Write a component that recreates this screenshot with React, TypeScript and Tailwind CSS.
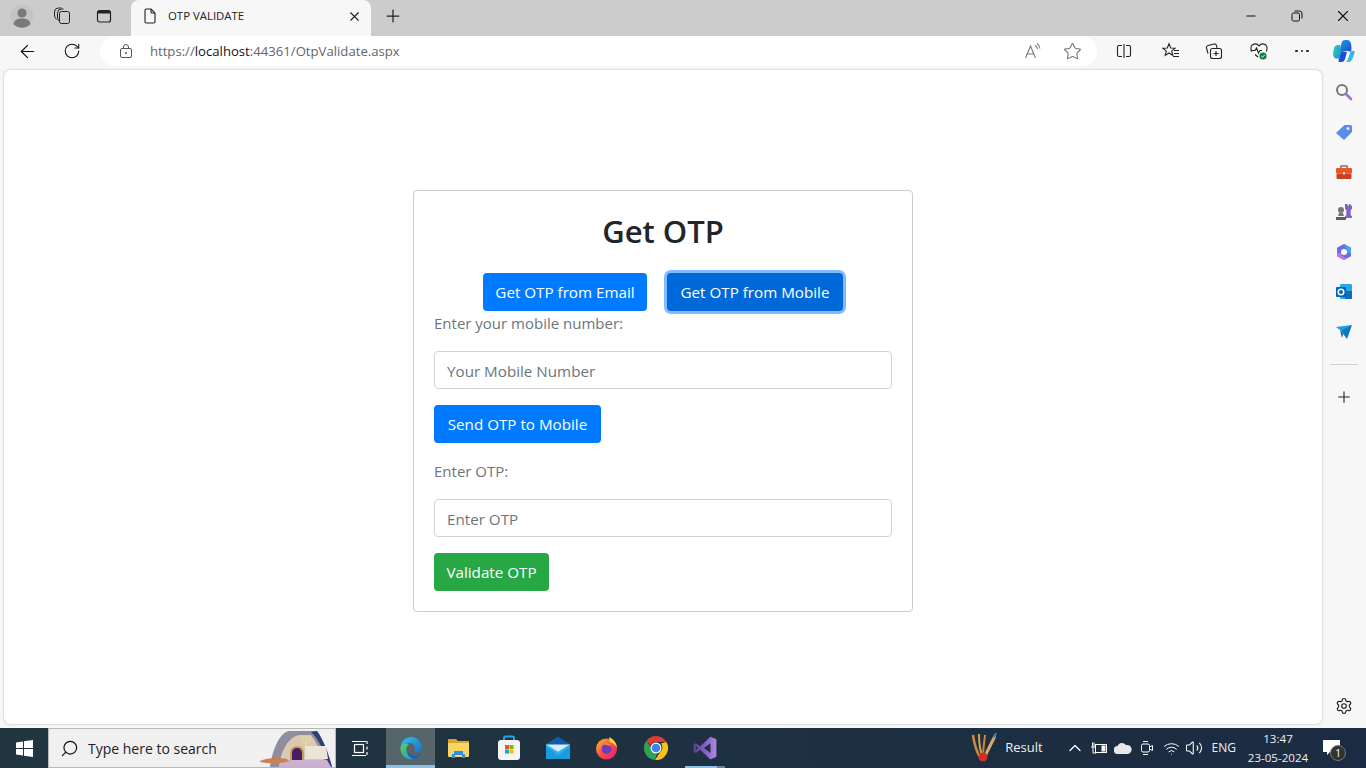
import type { ReactNode } from "react";
import { ArrowLeft, RotateCw, Plus, X, Minus, Star, Settings, ChevronUp, Volume2, Wifi, Search } from "lucide-react";

function Avatar() {
  return (
    <svg width="24" height="24" viewBox="0 0 24 24">
      <circle cx="12" cy="12" r="11.5" fill="#c4c4c4" />
      <circle cx="12" cy="9" r="4.6" fill="#7a7a7a" />
      <path d="M3.5 20c1-4.5 4.5-5.5 8.5-5.5s7.5 1 8.5 5.5a11.5 11.5 0 0 1-17 0z" fill="#7a7a7a" />
    </svg>
  );
}

function WorkspacesIcon() {
  return (
    <svg width="18" height="18" viewBox="0 0 18 18" fill="none" stroke="#222" strokeWidth="1">
      <rect x="6.5" y="4.5" width="10" height="12" rx="2" />
      <path d="M6.5 14.5a6 6 0 0 1-2-4.5V6a4 4 0 0 1 4-4h2" />
      <path d="M3.5 12.5A6 6 0 0 1 1.500 8V5a4 4 0 0 1 4-4h3" />
    </svg>
  );
}

function TabsIcon() {
  return (
    <svg width="16" height="16" viewBox="0 0 16 16" fill="none" stroke="#222">
      <rect x="1.5" y="2.5" width="13" height="11.5" rx="2" strokeWidth="1.2" />
      <path d="M2 3h12v2.5H2z" fill="#222" stroke="none" />
    </svg>
  );
}

function PageIcon() {
  return (
    <svg width="14" height="16" viewBox="0 0 14 16" fill="none" stroke="#222" strokeWidth="1.1">
      <path d="M2 2.5A1.5 1.5 0 0 1 3.5 1H8l4 4v8.5a1.5 1.5 0 0 1-1.5 1.5h-7A1.5 1.5 0 0 1 2 13.5z" />
      <path d="M8 1v3a1 1 0 0 0 1 1h3" />
    </svg>
  );
}

function RestoreIcon() {
  return (
    <svg width="12" height="12" viewBox="0 0 12 12" fill="none" stroke="#111">
      <rect x="1" y="3" width="7.5" height="8" rx="1.5" />
      <path d="M3.5 1h5A2.5 2.5 0 0 1 11 3.5v5" />
    </svg>
  );
}

function LockIcon() {
  return (
    <svg width="14" height="16" viewBox="0 0 14 16" fill="none" stroke="#555" strokeWidth="1">
      <rect x="1.5" y="5.5" width="11" height="9" rx="1.5" />
      <path d="M4.5 5.5V4a2.5 2.5 0 0 1 5 0v1.5" />
      <circle cx="7" cy="10" r="1" fill="#555" stroke="none" />
    </svg>
  );
}

function ReadAloudIcon() {
  return (
    <svg width="18" height="18" viewBox="0 0 18 18" fill="none" stroke="#777" strokeWidth="1.1">
      <path d="M1.5 16 6.5 4l5 12M3.2 12h6.600" />
      <path d="M11 3.5A5 5 0 0 1 13.5 7M13 1.500a7.5 7.5 0 0 1 3 5" />
    </svg>
  );
}

function SplitIcon() {
  return (
    <svg width="16" height="16" viewBox="0 0 16 16" fill="none" stroke="#222" strokeWidth="1.1">
      <path d="M6 2.5H3A1.5 1.5 0 0 0 1.5 4v8A1.5 1.5 0 0 0 3 13.5h3M10 2.5h3A1.5 1.5 0 0 1 14.5 4v8a1.5 1.5 0 0 1-1.5 1.5h-3" />
      <path d="M8 1v14" />
    </svg>
  );
}

function FavoritesIcon() {
  return (
    <svg width="18" height="18" viewBox="0 0 18 18" fill="none" stroke="#222" strokeWidth="1.1" className="ml-[3px]">
      <path d="M7 1.800 8.700 6l4.300.3-3.300 2.800 1.100 4.300L7 11l-3.800 2.400 1.100-4.300L1 6.300 5.300 6z" />
      <path d="M12 8.500h5M12 11.500h5M11 14.500h6" />
    </svg>
  );
}

function CollectionsIcon() {
  return (
    <svg width="18" height="18" viewBox="0 0 18 18" fill="none" stroke="#222" strokeWidth="1.1">
      <path d="M3 11.5 1.500 6A2 2 0 0 1 3 3.500L9 2a2 2 0 0 1 2.500 1.500L12 6" />
      <rect x="5.5" y="6.5" width="11" height="10" rx="2" fill="#f7f7f7" />
      <path d="M11 9v5M8.500 11.500h5" />
    </svg>
  );
}

function HealthIcon() {
  return (
    <svg width="20" height="20" viewBox="0 0 20 20" fill="none">
      <path d="M3 10.500C1.500 9 1.500 5 3.500 3.800 5.800 2.400 8.500 3 10 4.800 11.500 3 14.200 2.400 16.500 3.800 18.500 5 18.500 9 17 10.500" stroke="#222" strokeWidth="1.1" />
      <path d="M1.500 9.500H6l1.500-2.500 2 5 1.500-2.500h2" stroke="#222" strokeWidth="1.1" />
      <path d="M6 13.500 9 16" stroke="#222" strokeWidth="1.1" />
      <circle cx="14" cy="15" r="3.6" fill="#107c41" />
      <path d="M12.300 15l1.200 1.200 2.200-2.300" stroke="#fff" strokeWidth="1" />
    </svg>
  );
}

function CopilotIcon() {
  return (
    <svg width="24" height="24" viewBox="0 0 24 24">
      <defs>
        <linearGradient id="cpA" x1="0" y1="0" x2="1" y2="1">
          <stop offset="0" stopColor="#1b9de2" />
          <stop offset="1" stopColor="#1f4fc9" />
        </linearGradient>
        <linearGradient id="cpB" x1="0" y1="0" x2="1" y2="1">
          <stop offset="0" stopColor="#2dd4a8" />
          <stop offset="1" stopColor="#1b8fe0" />
        </linearGradient>
      </defs>
      <path d="M15 1h-2c-2 0-3 1-3.500 3L7 13c3 0 6-.5 8-1l4 .5c1-3 .5-8-1-10-.7-1-1.700-1.500-3-1.500z" fill="url(#cpA)" />
      <path d="M8 6H6C3.500 6 2.500 7.500 1.800 10c-.8 3-1 6 0 8 .5 1 1.500 1.500 2.700 1.500H7L9 13z" fill="url(#cpB)" />
      <path d="M9 23h7c2.500 0 4-2 5-4.500.7-2 1.500-4.500 1.700-6.500h-4l-2.700 8c-.5 1.800-1.500 3-3 3z" fill="#31b8ef" />
      <path d="M7 19.500l2-6.500h6l-2 7c-.4 1.800-1.800 3-3.500 3H6.500z" fill="#1f4fc9" />
    </svg>
  );
}

function ToolButton({ children, w }: { children: ReactNode; w: string }) {
  return <div className={`flex items-center justify-center shrink-0 ${w}`}>{children}</div>;
}

function TitleBar() {
  return (
    <div className="flex h-9 items-center bg-[#cccccc] shrink-0">
      <div className="flex w-[44px] justify-center pb-1"><Avatar /></div>
      <div className="flex w-[36px] justify-center pb-1"><WorkspacesIcon /></div>
      <div className="flex w-[48px] justify-center pb-1"><TabsIcon /></div>
      <div className="ml-[3px] flex h-9 w-[240px] items-center rounded-t-lg bg-[#f7f7f7] pb-1 pl-[12px] pr-[9px]">
        <PageIcon />
        <span className="ml-[11px] flex-1 text-[11.4px] text-[#222]">OTP VALIDATE</span>
        <X size={15} strokeWidth={1.8} color="#222" />
      </div>
      <div className="ml-[10px] flex w-[24px] justify-center pb-1"><Plus size={20} strokeWidth={1.5} color="#222" /></div>
      <div className="flex-1" />
      <div className="flex items-center pb-1">
        <div className="flex w-[46px] justify-center"><Minus size={14} strokeWidth={1.8} color="#111" /></div>
        <div className="flex w-[46px] justify-center"><RestoreIcon /></div>
        <div className="flex w-[46px] justify-center"><X size={18} strokeWidth={1.5} color="#111" /></div>
      </div>
    </div>
  );
}

function Toolbar() {
  return (
    <div className="flex h-[34px] items-start bg-[#f7f7f7] shrink-0">
      <div className="flex h-[30px] w-[56px] items-center justify-center"><ArrowLeft size={21} strokeWidth={1.4} color="#111" /></div>
      <div className="flex h-[30px] w-[32px] items-center justify-center"><RotateCw size={18} strokeWidth={1.4} color="#111" /></div>
      <div className="ml-[12px] flex h-[30px] w-[998px] items-center rounded-full bg-white pl-[19px] pr-[15px]">
        <LockIcon />
        <span className="ml-[17px] flex-1 pt-px text-[13.15px] text-[#666]">
          https://<span className="text-[#111]">localhost</span>:44361/OtpValidate.aspx
        </span>
        <ToolButton w="w-[60px]"><ReadAloudIcon /></ToolButton>
        <Star size={19} strokeWidth={1.4} color="#777" />
      </div>
      <div className="ml-[5px] flex h-[30px] items-center">
        <ToolButton w="w-[44px]"><SplitIcon /></ToolButton>
        <ToolButton w="w-[46px]"><FavoritesIcon /></ToolButton>
        <ToolButton w="w-[44px]"><CollectionsIcon /></ToolButton>
        <ToolButton w="w-[46px]"><HealthIcon /></ToolButton>
        <ToolButton w="w-[40px]">
          <span className="flex gap-[3px]">
            <i className="size-[2.5px] rounded-full bg-[#222]" />
            <i className="size-[2.5px] rounded-full bg-[#222]" />
            <i className="size-[2.5px] rounded-full bg-[#222]" />
          </span>
        </ToolButton>
        <ToolButton w="w-[44px]"><CopilotIcon /></ToolButton>
      </div>
    </div>
  );
}

function Sidebar() {
  return (
    <div className="flex w-[44px] shrink-0 flex-col items-center pt-[2px]">
      <div className="flex h-10 items-center">
        <svg width="18" height="18" viewBox="0 0 18 18" fill="none">
          <circle cx="7" cy="7" r="5" stroke="#777" strokeWidth="2" />
          <path d="M11 11l5 5" stroke="#a070d0" strokeWidth="2.6" strokeLinecap="round" />
        </svg>
      </div>
      <div className="flex h-10 items-center">
        <svg width="18" height="18" viewBox="0 0 18 18">
          <path d="M1 10 9.500 2h6A1.500 1.500 0 0 1 17 3.500V9l-8 8z" fill="#5b8de8" />
          <circle cx="13" cy="5.5" r="1.5" fill="#e6eefb" />
        </svg>
      </div>
      <div className="flex h-10 items-center">
        <svg width="18" height="18" viewBox="0 0 18 18">
          <path d="M6 5V3h6v2" fill="none" stroke="#8a6d5d" strokeWidth="1.5" />
          <rect x="1" y="5" width="16" height="5.5" rx="1" fill="#e8562a" />
          <rect x="1.5" y="10.5" width="15" height="5.5" rx="1" fill="#c8421d" />
          <rect x="8" y="9" width="2" height="2.5" fill="#f3d9c8" />
        </svg>
      </div>
      <div className="flex h-10 items-center">
        <svg width="20" height="20" viewBox="0 0 20 20">
          <path d="M12 2h1.500v1.500H15V2h1.500v1.500H18V2v5l-1.300 1v5l1.300 1.500V16h-7v-1.500L12.300 13V8L11 7V2z" fill="#8661c5" />
          <circle cx="7" cy="8" r="3" fill="#777" />
          <path d="M5 11h4l1 3H4z" fill="#777" />
          <path d="M2 15h10v3H2z" fill="#5e5e5e" />
        </svg>
      </div>
      <div className="flex h-10 items-center">
        <svg width="18" height="18" viewBox="0 0 18 18">
          <path d="M9 1l7 3.800v8.400L9 17l-7-3.800V4.800z" fill="#6f6be0" />
          <path d="M9 1l7 3.800V10h-4V7z" fill="#40a8e8" />
          <path d="M2 10h4v2l5 3-2 2-7-3.800z" fill="#b57be0" />
          <circle cx="9" cy="9" r="3" fill="#fff" />
        </svg>
      </div>
      <div className="flex h-10 items-center">
        <svg width="18" height="18" viewBox="0 0 18 18">
          <rect x="5" y="1" width="12" height="15" rx="1" fill="#28a8ea" />
          <rect x="10" y="8" width="7" height="8" fill="#0f6cbd" />
          <rect x="1" y="4" width="10" height="10" rx="1" fill="#0364b8" />
          <circle cx="6" cy="9" r="2.8" fill="none" stroke="#fff" strokeWidth="1.5" />
        </svg>
      </div>
      <div className="flex h-10 items-center">
        <svg width="18" height="16" viewBox="0 0 18 16">
          <path d="M1 3 17 1 9 9z" fill="#1ba0e2" />
          <path d="M6 7l11-6-5 14z" fill="#0c78c2" />
          <path d="M5 6l3 4-1 4z" fill="#08539a" />
        </svg>
      </div>
      <div className="my-[12px] h-px w-[28px] bg-[#d0d0d0]" />
      <div className="flex h-[40px] items-center"><Plus size={18} strokeWidth={1.5} color="#222" /></div>
      <div className="flex-1" />
      <div className="flex h-[38px] items-center pb-[6px]"><Settings size={18} strokeWidth={1.6} color="#222" /></div>
    </div>
  );
}

function Field({ placeholder }: { placeholder: string }) {
  return (
    <input
      readOnly
      placeholder={placeholder}
      className="block h-[38px] w-full rounded border border-[#ced4da] bg-white px-3 pt-[2px] text-[15.2px] placeholder:text-[#6c757d]"
    />
  );
}

function OtpCard() {
  const btn = "h-[38px] rounded text-[15.2px] text-white";
  return (
    <div className="h-[422px] w-[500px] rounded border border-[#cccccc] p-5 text-[15px] leading-6 text-[#6c757d]">
      <h2 className="mb-[23px] pt-px text-center text-[31px] leading-[38px] font-semibold text-[#212529]">Get OTP</h2>
      <div className="flex justify-center gap-5">
        <button className={`${btn} w-[164px] bg-[#007bff]`}>Get OTP from Email</button>
        <button className={`${btn} w-[176px] bg-[#0069d9] ring-[3px] ring-[#80bdff]`}>Get OTP from Mobile</button>
      </div>
      <p className="mb-4">Enter your mobile number:</p>
      <Field placeholder="Your Mobile Number" />
      <button className={`${btn} mt-4 block w-[167px] bg-[#007bff]`}>Send OTP to Mobile</button>
      <p className="mt-4 mb-4">Enter OTP:</p>
      <Field placeholder="Enter OTP" />
      <button className={`${btn} mt-4 block w-[115px] bg-[#28a745]`}>Validate OTP</button>
    </div>
  );
}

function SearchArt() {
  return (
    <svg width="76" height="38" viewBox="0 0 76 38" className="shrink-0">
      <path d="M11 38C13 22 20 4 30 2h28c7 10 12 24 15 36z" fill="#8f8d9e" />
      <path d="M58 2c7 10 12 24 15 36h-4C66 24 60 10 52 3z" fill="#2d3f7a" />
      <path d="M20 38C22 20 30 8 40 6h12c6 8 12 20 15 32z" fill="#d9c9b0" />
      <path d="M31 34V24c0-4 3-7 7-7s7 3 7 7v10z" fill="#c99a5a" />
      <path d="M33 33V24c0-3 2-5 5-5s5 2 5 5v9z" fill="#4a1d63" />
      <path d="M46 17h21l2 13H46z" fill="#ece4d6" />
      <path d="M24 31h44l4 7H20z" fill="#c9b1cf" />
      <path d="M1 32c6-3 18-4 27-2l2 2c-8 3-20 3-29 1z" fill="#c8814f" />
      <path d="M41 8h12M43 8c0 4 2 6 4 6s4-2 4-6M47 8v9" stroke="#e8d8a0" strokeWidth="1.2" fill="none" />
    </svg>
  );
}

function Taskbar() {
  return (
    <div className="flex h-10 items-stretch bg-gradient-to-r from-[#21363f] to-[#1b2b43] shrink-0 text-white">
      <div className="flex w-[48px] items-center justify-center">
        <svg width="17" height="17" viewBox="0 0 17 17" fill="#fff">
          <path d="M0 2.400 7 1.400V8H0zM8 1.300 17 0v8H8zM0 9h7v6.600l-7-1zM8 9h9v8l-9-1.300z" />
        </svg>
      </div>
      <div className="flex w-[288px] items-center border border-[#b8b8b8] bg-[#f0f0f0] pl-[11px]">
        <Search size={19} strokeWidth={1.5} color="#111" className="-scale-x-100" />
        <span className="ml-[9px] flex-1 text-[14px] text-[#222]">Type here to search</span>
        <SearchArt />
      </div>
      <div className="flex w-[50px] items-center justify-center pr-[2px]">
        <svg width="17" height="17" viewBox="0 0 17 17" fill="none" stroke="#fff" strokeWidth="1.2">
          <rect x="2.5" y="4.5" width="9" height="8" />
          <path d="M0 1.500h14M0 15.500h14M15 1v3M15 6.500v3M15 12v3" />
        </svg>
      </div>
      <div className="flex w-[49px] items-center justify-center border-b-[3px] border-[#8ac0ea] bg-[#566569] pt-[2px]">
        <svg width="24" height="24" viewBox="0 0 24 24">
          <defs>
            <linearGradient id="edA" x1="0" y1="0" x2="1" y2="1">
              <stop offset="0" stopColor="#35c1f1" />
              <stop offset="1" stopColor="#1b6fc2" />
            </linearGradient>
            <linearGradient id="edB" x1="0" y1="0" x2="1" y2="1">
              <stop offset="0" stopColor="#60d04f" />
              <stop offset="1" stopColor="#1f9ad6" />
            </linearGradient>
          </defs>
          <path d="M12 1a11 11 0 0 1 11 11c0 3-3 4.500-6 4-2-.4-1-2-1-3.500C16 9 13 6.500 9 7 5 7.500 2.500 10 1.500 13 1 6 6 1 12 1z" fill="url(#edA)" />
          <path d="M1.500 13C2 8 7 6.500 10.500 8c-3 1.500-4 5-2.500 9 1 3 4 5.500 7 5.800C8 24.500 2 20 1.500 13z" fill="url(#edB)" />
          <path d="M15 22.800C11 22 8.500 18.500 9 14.500c.5 4 5 6 9 5l4-2.500c-1 3-4 5.500-7 5.800z" fill="#1c5fb0" />
        </svg>
      </div>
      <div className="flex w-[49px] items-center justify-center">
        <svg width="24" height="22" viewBox="0 0 24 22">
          <path d="M0 3a1 1 0 0 1 1-1h7l2 2h11v3H0z" fill="#e0a526" />
          <rect x="0" y="6" width="21" height="14" rx="1" fill="#f8d568" />
          <path d="M6 14h9v3h2v4h-3v-3H7v3H4v-4h2z" fill="#2f8fdc" />
        </svg>
      </div>
      <div className="flex w-[49px] items-center justify-center">
        <svg width="24" height="26" viewBox="0 0 24 26">
          <path d="M7 6V3a1.500 1.500 0 0 1 1.500-1.500h7A1.500 1.500 0 0 1 17 3v3" fill="none" stroke="#29a3e0" strokeWidth="2" />
          <rect x="1" y="5" width="22" height="20" rx="3" fill="#f5f5f5" />
          <rect x="8" y="10" width="4" height="4" fill="#f25022" />
          <rect x="12.5" y="10" width="4" height="4" fill="#7fba00" />
          <rect x="8" y="14.5" width="4" height="4" fill="#00a4ef" />
          <rect x="12.5" y="14.5" width="4" height="4" fill="#ffb900" />
        </svg>
      </div>
      <div className="flex w-[49px] items-center justify-center">
        <svg width="24" height="24" viewBox="0 0 24 24">
          <path d="M0 8.500 12 1l12 7.500v14.500H0z" fill="#1c9ae0" />
          <path d="M0 8.500 12 1l12 7.500-12 7z" fill="#0d5cab" />
          <path d="M0 8.500h24L12 16z" fill="#d6ecfa" />
          <path d="M0 8.500 12 16l12-7.500v2L12 19 0 10.500z" fill="#35b1ef" />
        </svg>
      </div>
      <div className="flex w-[49px] items-center justify-center">
        <svg width="24" height="24" viewBox="0 0 24 24">
          <defs>
            <linearGradient id="ffA" x1="0" y1="0" x2="1" y2="1">
              <stop offset="0" stopColor="#ffbd2e" />
              <stop offset=".5" stopColor="#ff4f3f" />
              <stop offset="1" stopColor="#d5197c" />
            </linearGradient>
          </defs>
          <circle cx="11.5" cy="13" r="10.5" fill="url(#ffA)" />
          <path d="M14 1c5 2 8 7 8 11-2-4-5-5-7-6z" fill="#ffd03a" />
          <circle cx="11.5" cy="13" r="5" fill="#6f3bc0" />
          <path d="M7 8c3-2 7-1 9 2-3-1-6-1-9-2z" fill="#ff8a1f" />
        </svg>
      </div>
      <div className="flex w-[49px] items-center justify-center">
        <svg width="24" height="24" viewBox="0 0 24 24">
          <path d="M12 0a12 12 0 0 1 10.400 6H12a6 6 0 0 0-5.500 3.500L2.600 4.500A12 12 0 0 1 12 0z" fill="#e33b2e" />
          <path d="M22.400 6A12 12 0 0 1 11 24l5.200-8A6 6 0 0 0 17 7.500z" fill="#fbc116" />
          <path d="M2.600 4.500 7 12a6 6 0 0 0 6 6l-2 6A12 12 0 0 1 2.600 4.500z" fill="#2fa14f" />
          <circle cx="12" cy="12" r="5.5" fill="#fff" />
          <circle cx="12" cy="12" r="4.3" fill="#3f7fe8" />
        </svg>
      </div>
      <div className="relative flex w-[49px] items-center justify-center">
        <svg width="26" height="26" viewBox="0 0 24 24">
          <defs>
            <linearGradient id="vsA" x1="0" y1="0" x2="1" y2="0">
              <stop offset="0" stopColor="#5f3f94" />
              <stop offset=".6" stopColor="#8c66cf" />
              <stop offset="1" stopColor="#ab8ae0" />
            </linearGradient>
          </defs>
          <path
            fillRule="evenodd"
            d="M17 1.500 7.500 10.500 3.500 7.500 1.500 8.500v7l2 1 4-3 9.500 9 5.500-2.500V4zM17 7.500v9L11 12zM3.500 9.800 5.500 12 3.500 14.200z"
            fill="url(#vsA)"
          />
        </svg>
        <span className="absolute bottom-0 left-[5px] h-[2px] w-[32px] bg-[#8ac0ea]" />
        <span className="absolute bottom-0 left-[37px] h-[2px] w-[8px] bg-[#5a87a8]" />
      </div>
      <div className="flex-1" />
      <div className="flex items-center pr-[15px]">
        <svg width="26" height="30" viewBox="0 0 26 30" className="mr-[8px]" fill="none">
          <path d="M2 2c1 8 3 16 8 24" stroke="#c88a3c" strokeWidth="2.5" />
          <path d="M8 1c0 8 1 17 4 24" stroke="#d9a050" strokeWidth="2" />
          <path d="M14 2c-1 8-2 16-2 22" stroke="#c88a3c" strokeWidth="2" />
          <path d="M24 3l-8 16-3 7" stroke="#d9a86a" strokeWidth="3" />
          <path d="M25 0l-2 5" stroke="#2d8fd0" strokeWidth="2" />
          <circle cx="12" cy="24" r="4.5" fill="#d22f27" />
        </svg>
        <span className="text-[13px] text-[#f0f0f0]">Result</span>
        <ChevronUp size={20} strokeWidth={1.5} className="ml-[22px]" />
        <svg width="16" height="14" viewBox="0 0 16 14" className="ml-[6px]" fill="none" stroke="#fff">
          <rect x="4.5" y="3.5" width="11" height="8" />
          <path d="M0 6h4M1.500 1.500v4M3 1.500v4M2 6v6h3" />
          <rect x="11" y="5" width="3" height="5" fill="#fff" />
        </svg>
        <svg width="18" height="12" viewBox="0 0 18 12" className="ml-[7px]">
          <path d="M4 12a4 4 0 0 1-.5-8A5 5 0 0 1 12 3a4.500 4.500 0 0 1 2 9z" fill="#e8e8e8" />
        </svg>
        <svg width="14" height="18" viewBox="0 0 14 18" className="ml-[8px]" fill="none" stroke="#fff">
          <rect x="1.5" y="5" width="8" height="8" rx="1.5" />
          <path d="M9.500 8l3-1.500v5l-3-1.500M3 2.500h5M3 15.500h5" />
        </svg>
        <Wifi size={17} strokeWidth={1.4} className="ml-[9px]" />
        <Volume2 size={18} strokeWidth={1.4} className="ml-[5px]" />
        <span className="ml-[9px] text-[12px] text-[#f0f0f0]">ENG</span>
        <div className="ml-[12px] flex w-[60px] flex-col items-center whitespace-nowrap text-[11.6px] leading-[19px] text-[#f0f0f0]">
          <span>13:47</span>
          <span>23-05-2024</span>
        </div>
        <div className="relative ml-[15px] mr-[6px] w-[22px]">
          <svg width="18" height="16" viewBox="0 0 18 16" fill="#fff">
            <path d="M0 0h17v12H7l-3 3v-3H0z" />
          </svg>
          <span className="absolute left-[7px] top-[5px] flex size-[16px] items-center justify-center rounded-full border border-[#777] bg-[#333] text-[10px] text-white">1</span>
        </div>
      </div>
    </div>
  );
}

export default function App() {
  return (
    <div className="flex h-screen w-[1366px] flex-col overflow-hidden bg-[#f7f7f7] font-['Open_Sans','Noto_Sans',sans-serif]">
      <TitleBar />
      <Toolbar />
      <div className="flex min-h-0 flex-1">
        <div className="min-w-0 flex-1 pb-[4px] pl-[4px]">
          <div className="flex h-full justify-center rounded-md bg-white pt-[120px] shadow-[0_0_2px_rgba(0,0,0,0.35)]">
            <OtpCard />
          </div>
        </div>
        <Sidebar />
      </div>
      <Taskbar />
    </div>
  );
}
